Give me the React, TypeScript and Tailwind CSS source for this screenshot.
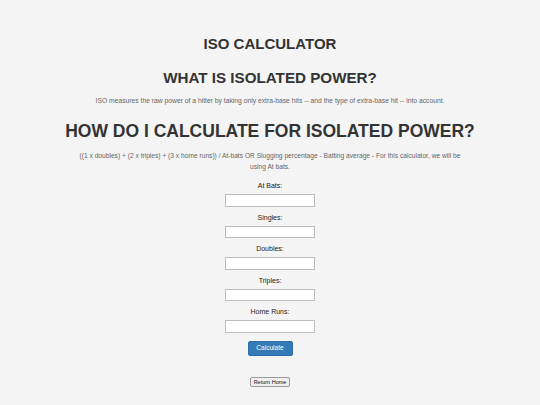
import React from "react";

const fields = ["At Bats:", "Singles:", "Doubles:", "Triples:", "Home Runs:"];

function Field({ label }: { label: string }) {
  return (
    <div className="flex flex-col items-center mb-[6px]">
      <label className="text-[7px] leading-[10px] text-[#222] mb-[3px]">{label}</label>
      <input type="text" className="w-[90px] h-[12.5px] bg-white border border-[#bdbdbd] outline-none" />
    </div>
  );
}

export default function App() {
  return (
    <div className="min-h-[405px] w-[540px] bg-[#f4f4f4] text-center text-[#333] font-['Liberation_Sans',Arial,sans-serif] pt-[35px]">
      <h1 className="text-[15px] leading-[18px] font-bold text-[#333]">ISO CALCULATOR</h1>
      <h2 className="mt-[15px] text-[15.2px] leading-[20px] font-bold text-[#333]">WHAT IS ISOLATED POWER?</h2>
      <p className="mt-[8px] text-[6.75px] leading-[10px] text-[#666]">
        ISO measures the raw power of a hitter by taking only extra-base hits -- and the type of extra-base hit -- into account.
      </p>
      <h2 className="mt-[14px] text-[17.5px] leading-[22px] font-bold text-[#333]">HOW DO I CALCULATE FOR ISOLATED POWER?</h2>
      <p className="mt-[7.5px] mx-auto max-w-[392px] text-[6.65px] leading-[11px] text-[#666]">
        ((1 x doubles) + (2 x triples) + (3 x home runs)) / At-bats OR Slugging percentage - Batting average - For this calculator, we will be using At bats.
      </p>
      <form className="mt-[9.5px] flex flex-col items-center" onSubmit={(e) => e.preventDefault()}>
        {fields.map((f) => (
          <Field key={f} label={f} />
        ))}
        <button type="submit" className="mt-[2px] w-[45px] h-[15px] bg-[#337ab7] text-white text-[6.6px] rounded-[2px] border border-[#2e6da4]">
          Calculate
        </button>
      </form>
      <div className="mt-[21px] flex justify-center">
        <button className="w-[40px] h-[10px] bg-[#efefef] border border-[#9a9a9a] rounded-[2px] text-[5.5px] leading-[8px] text-[#111]">
          Return Home
        </button>
      </div>
    </div>
  );
}
